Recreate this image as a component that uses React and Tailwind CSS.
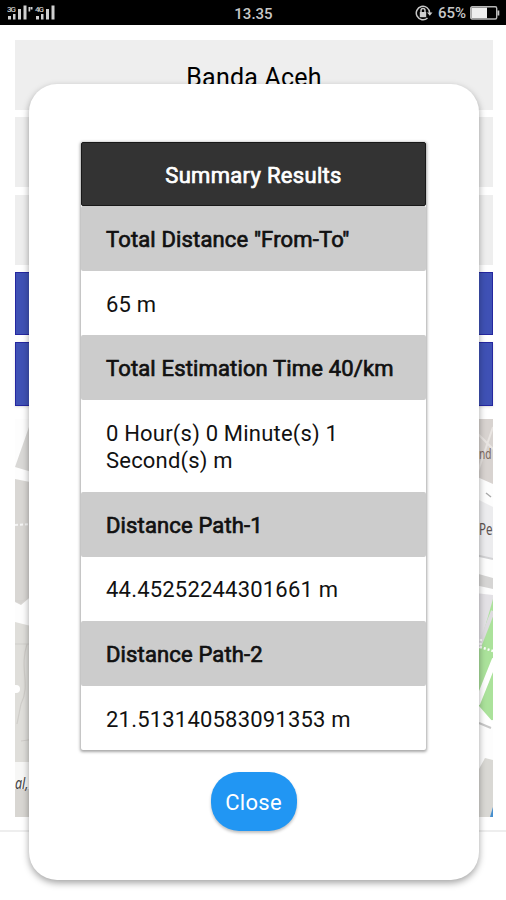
import { useState } from 'react';


const results = [
    { label: 'Total Distance "From-To"', value: '65 m' },
    { label: 'Total Estimation Time 40/km', value: '0 Hour(s) 0 Minute(s) 1 Second(s) m' },
    { label: 'Distance Path-1', value: '44.45252244301661 m' },
    { label: 'Distance Path-2', value: '21.513140583091353 m' },
];

function SignalIcon() {
    return (
        <svg width="50" height="16" viewBox="0 0 50 16" fill="#d0d0d0">
            <text x="0" y="7" fontSize="8" fontWeight="500" fontFamily="Roboto, sans-serif" textLength="9">3G</text>
            <rect x="1" y="11" width="3" height="3.5" />
            <rect x="6" y="9" width="2.5" height="5.5" />
            <rect x="11" y="4" width="3" height="10.5" />
            <rect x="16.5" y="0.5" width="3" height="14" />
            <rect x="21.5" y="2" width="1.7" height="4.5" />
            <rect x="23.5" y="2" width="2" height="2.5" />
            <text x="28" y="7" fontSize="8" fontWeight="500" fontFamily="Roboto, sans-serif" textLength="9">4G</text>
            <rect x="29" y="11" width="3" height="3.5" />
            <rect x="34" y="9" width="2.5" height="5.5" />
            <rect x="39" y="4" width="3" height="10.5" />
            <rect x="44.5" y="0.5" width="3" height="14" />
        </svg>
    );
}

function RotationLockIcon() {
    return (
        <svg width="18" height="16" viewBox="0 0 18 16" fill="none" stroke="#c8c8c8" strokeWidth="1.5">
            <path d="M12.5 13A6.7 6.7 0 1 1 14.7 8" />
            <path d="M12 7.5h5.5l-2.7 3.2z" fill="#d0d0d0" stroke="none" />
            <rect x="4.8" y="7" width="6.4" height="5.2" fill="#d0d0d0" stroke="none" />
            <path d="M6 7V5.5a2 2 0 0 1 4 0V7" />
        </svg>
    );
}

function BatteryIcon() {
    return (
        <svg width="30" height="14" viewBox="0 0 30 14">
            <rect x="0.7" y="0.7" width="26" height="12.3" rx="1.5" fill="none" stroke="#b8b8b8" strokeWidth="1.4" />
            <rect x="1.4" y="1.6" width="15.6" height="10.6" fill="#eeeeee" />
            <rect x="27.5" y="4.5" width="1.8" height="5" fill="#c8c8c8" />
        </svg>
    );
}

function StatusBar() {
    return (
        <div className="grid h-[25px] grid-cols-3 items-center bg-black pr-1.5 pl-[7px] text-[#c8c8c8]">
            <SignalIcon />
            <span className="pt-1 text-center text-[15px] leading-none font-medium">13.35</span>
            <div className="flex items-center justify-end">
                <RotationLockIcon />
                <span className="mr-[4px] ml-[5px] pt-px text-[15px] leading-none font-medium">65%</span>
                <BatteryIcon />
            </div>
        </div>
    );
}

function StreetMap() {
    return (
        <svg className="block h-[398px] w-full" viewBox="0 0 478 398" fontFamily="Noto Sans, sans-serif">
            <rect width="478" height="398" fill="#fdfdfd" />
            <path d="M14 8L0 48L20 54V8z" fill="#d9d8d6" />
            <path d="M0 60L20 64V174L6 186L0 183z" fill="#d9d7d4" />
            <path d="M0 106l20-1" stroke="#f5f5f5" strokeWidth="2" strokeDasharray="3 2" />
            <path d="M0 182l6 3 4-5V181L0 181z" fill="#d5d3d0" />
            <path d="M0 203L20 208V343H0z" fill="#dfdeda" />
            <path d="M0 225h20M12 225c-8 25 4 40-6 60l-4 20M20 320L6 322" fill="none" stroke="#cfcdc9" strokeWidth="1.2" />
            <circle cx="1" cy="270" r="4" fill="#fff" />
            <path d="M0 348h20v50H0z" fill="#d8d6d2" />
            <rect y="343" width="20" height="27" fill="#f7f7f6" />
            <text x="0" y="370" fontSize="16" fontStyle="italic" fill="#444444" textLength="13.5" lengthAdjust="spacingAndGlyphs">al,</text>

            <path d="M460 0h18v65l-18-8z" fill="#d8d3d0" />
            <path d="M460 12L478 30M478 8L462 55" stroke="#e9e5e2" strokeWidth="2" />
            <path d="M471 74l5 4" stroke="#a9a9a9" strokeWidth="1.5" />
            <path d="M460 79L478 88V140L460 136z" fill="#ececee" />
            <path d="M460 136L478 140" stroke="#d2d2d4" strokeWidth="2" />
            <path d="M460 154L478 159V170L460 166z" fill="#d6d5d4" />
            <path d="M460 174L478 176V212L460 240z" fill="#e3e1e5" />
            <path d="M478 180L464 229V303L478 301z" fill="#abe29b" />
            <path d="M478 192L464 228" stroke="#dedce0" strokeWidth="4" />
            <path d="M466 220l-1 8 13 4" fill="none" stroke="#fff" strokeWidth="2.5" strokeDasharray="2 2" />
            <path d="M480 240L462 285" stroke="#fff" strokeWidth="6" />
            <path d="M464 287L478 303V309L464 306z" fill="#fff" />
            <path d="M464 304l12 5" stroke="#c9c9c9" strokeWidth="2" />
            <path d="M464 350L470 339L478 341V398H464z" fill="#d9d8d4" />
            <path d="M475 398l3-10v10z" fill="#468fce" />
            <text x="464" y="40" fontSize="15" fill="#7a675f" textLength="12.5" lengthAdjust="spacingAndGlyphs">nd</text>
            <text x="464" y="116" fontSize="16" fill="#5d5350" textLength="13.5" lengthAdjust="spacingAndGlyphs">Pe</text>
        </svg>
    );
}

function RouteScreen() {
    return (
        <div className="h-[875px] pt-[15px]">
            <div className="pr-[13px] pl-[15px]">
                <div className="flex h-[70px] items-center justify-center bg-[#eeeeee] pt-1.5 text-[25px] tracking-[0.2px] text-black">
                    Banda Aceh
                </div>
                <div className="mt-[7px] h-[70px] bg-[#eeeeee]"></div>
                <div className="mt-[8px] h-[70px] bg-[#eeeeee]"></div>
                <div className="mt-[7px] h-[63px] border border-[#2527a0] bg-[#3f51b5]"></div>
                <div className="mt-[7px] h-[64px] border border-[#2527a0] bg-[#3f51b5] shadow-sm"></div>
                <div className="mt-[13px]">
                    <StreetMap />
                </div>
            </div>
            <div className="mt-[13px] border-t-2 border-[#eeeeee]"></div>
        </div>
    );
}

function SummaryTable() {
    return (
        <div className="w-[345px] rounded-[2px] bg-white text-[22px] leading-[27px] text-[#111111] shadow-[0_1px_3px_1px_rgba(0,0,0,0.35)]">
            <div className="flex h-16 items-center justify-center rounded-[2px] border border-[#181818] bg-[#333333] pt-0.5 tracking-[0.3px] text-white [-webkit-text-stroke:0.7px]">
                Summary Results
            </div>
            {results.map((item) => (
                <div key={item.label}>
                    <div className="flex h-[65px] items-center rounded-[2px] bg-[#cccccc] pt-0.5 pl-[25px] tracking-[0.15px] whitespace-nowrap [-webkit-text-stroke:0.7px]">
                        {item.label}
                    </div>
                    <div className="px-[25px] pt-[19.75px] pb-[17.6px] tracking-[0.2px]">
                        {item.value}
                    </div>
                </div>
            ))}
        </div>
    );
}

export default function App() {
    const [open, setOpen] = useState(true);

    return (
        <div className="relative h-[900px] w-[506px] overflow-hidden bg-white font-['Roboto',sans-serif]">
            <StatusBar />
            <RouteScreen />
            {open && (
                <div className="absolute top-[84px] left-[29px] flex h-[796px] w-[450px] flex-col items-center rounded-[28px] bg-white pt-[58px] pr-[1px] shadow-[0_3px_7px_0_rgba(0,0,0,0.36)]">
                    <SummaryTable />
                    <button
                        type="button"
                        onClick={() => setOpen(false)}
                        className="mt-[21.5px] h-[59px] w-[86px] rounded-[28px] bg-[#2196f3] pt-0.5 text-[22px] tracking-[0.3px] text-white shadow-[0_2px_3px_rgba(0,0,0,0.25)]"
                    >
                        Close
                    </button>
                </div>
            )}
        </div>
    );
}
